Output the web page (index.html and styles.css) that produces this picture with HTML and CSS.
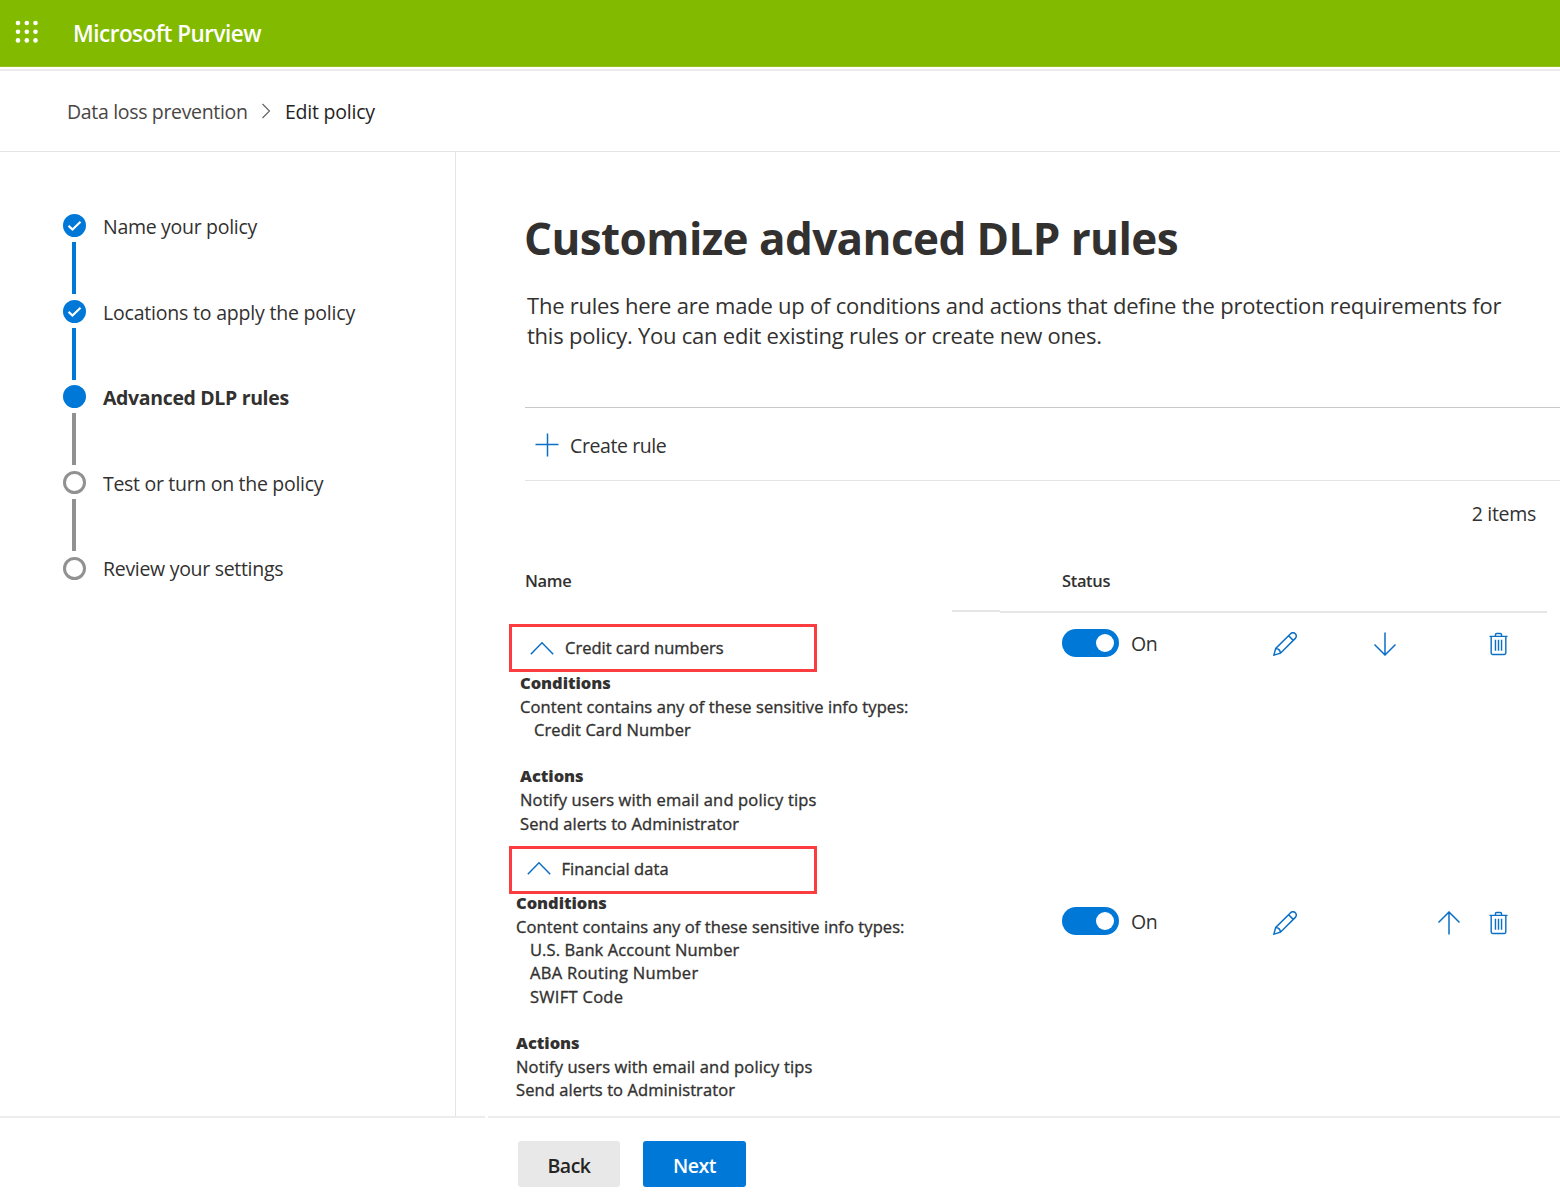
FILE: index.html
```html
<!DOCTYPE html>
<html lang="en">
<head>
<meta charset="utf-8">
<title>Microsoft Purview</title>
<link rel="stylesheet" href="styles.css">
</head>
<body>
<svg width="0" height="0" class="defs">
  <symbol id="pencil" viewBox="0 0 24 24"><path d="M.9 23.1 2.7 16.4 17.6 1.7A3.3 3.3 0 0 1 22.3 6.4L7.5 21.2ZM15.6 3.7l4.7 4.7M2.7 16.4c2.8.2 4.6 2 4.8 4.8"/></symbol>
  <symbol id="down" viewBox="0 0 24 24"><path d="M12 .5v22.5M1.5 12.5 12 23l10.500-10.500"/></symbol>
  <symbol id="up" viewBox="0 0 24 24"><path d="M12 23.500V1M1.500 11.500 12 1l10.500 10.500"/></symbol>
  <symbol id="trash" viewBox="0 0 20 24"><path d="M.5 4h19M2.300 4v17.500q0 1.500 1.500 1.500h12.400q1.500 0 1.500-1.500V4M6.800 4V2.300q0-1.300 1.300-1.300h3.800q1.300 0 1.300 1.300V4M6.800 7.500v11.500M10 7.500v11.500M13.200 7.500v11.500"/></symbol>
  <symbol id="chev" viewBox="0 0 24 14"><path d="M.8 13.200 12 1.800 23.200 13.200"/></symbol>
  <symbol id="check" viewBox="0 0 24 24"><path d="M5.800 12.400 9.900 16.200 18.300 8"/></symbol>
</svg>
<header class="topbar">
  <svg class="waffle" viewBox="0 0 24 24"><g fill="#fff"><circle cx="3" cy="3" r="2.300"/><circle cx="11.800" cy="3" r="2.300"/><circle cx="20.500" cy="3" r="2.300"/><circle cx="3" cy="11.700" r="2.300"/><circle cx="11.800" cy="11.700" r="2.300"/><circle cx="20.500" cy="11.700" r="2.300"/><circle cx="3" cy="20.400" r="2.300"/><circle cx="11.800" cy="20.400" r="2.300"/><circle cx="20.500" cy="20.400" r="2.300"/></g></svg>
  <span class="brand">Microsoft Purview</span>
</header>
<nav class="crumbs">
  <span class="crumb">Data loss prevention</span>
  <svg class="crumb-sep" viewBox="0 0 10 16"><path d="M1.500 1 8.500 8 1.500 15"/></svg>
  <span class="crumb crumb-current">Edit policy</span>
</nav>
<main class="main">
  <aside class="steps">
    <div class="step done"><div class="rail"><i class="dot"><svg><use href="#check"/></svg></i><i class="bar"></i></div><span>Name your policy</span></div>
    <div class="step done"><div class="rail"><i class="dot"><svg><use href="#check"/></svg></i><i class="bar"></i></div><span class="wide">Locations to apply the policy</span></div>
    <div class="step current"><div class="rail"><i class="dot"></i><i class="bar"></i></div><span>Advanced DLP rules</span></div>
    <div class="step"><div class="rail"><i class="dot"></i><i class="bar"></i></div><span>Test or turn on the policy</span></div>
    <div class="step"><div class="rail"><i class="dot"></i></div><span>Review your settings</span></div>
  </aside>
  <section class="content">
    <h1 class="title">Customize advanced DLP rules</h1>
    <p class="desc">The rules here are made up of conditions and actions that define the protection requirements for<br>this policy. You can edit existing rules or create new ones.</p>
    <div class="toolbar">
      <svg class="plus" viewBox="0 0 24 24"><path d="M12.500 .5v23M.5 11.500h23"/></svg>
      <span>Create rule</span>
    </div>
    <div class="count">2 items</div>
    <div class="thead"><span class="th-name">Name</span><span class="th-status">Status</span></div>
    <div class="divider"><i class="divider-a"></i><i class="divider-b"></i></div>
    <div class="rule rule-first">
      <div class="rule-info">
        <div class="rule-name"><svg><use href="#chev"/></svg><span>Credit card numbers</span></div>
        <div class="details">
          <b>Conditions</b>
          <p>Content contains any of these sensitive info types:</p>
          <p class="sub">Credit Card Number</p>
          <b class="actions">Actions</b>
          <p class="notify">Notify users with email and policy tips</p>
          <p>Send alerts to Administrator</p>
        </div>
      </div>
      <div class="controls"><i class="toggle"></i><span class="on">On</span><svg class="edit"><use href="#pencil"/></svg><svg class="move"><use href="#down"/></svg><svg class="trash"><use href="#trash"/></svg></div>
    </div>
    <div class="rule rule-second">
      <div class="rule-info">
        <div class="rule-name"><svg><use href="#chev"/></svg><span>Financial data</span></div>
        <div class="details">
          <b>Conditions</b>
          <p>Content contains any of these sensitive info types:</p>
          <p class="sub">U.S. Bank Account Number</p>
          <p class="sub aba">ABA Routing Number</p>
          <p class="sub aba">SWIFT Code</p>
          <b class="actions">Actions</b>
          <p class="notify">Notify users with email and policy tips</p>
          <p>Send alerts to Administrator</p>
        </div>
      </div>
      <div class="controls"><i class="toggle"></i><span class="on">On</span><svg class="edit"><use href="#pencil"/></svg><svg class="move"><use href="#up"/></svg><svg class="trash"><use href="#trash"/></svg></div>
    </div>
  </section>
</main>
<footer class="footer">
  <div class="footer-line"><i class="line-a"></i><i class="line-b"></i></div>
  <div class="buttons"><button class="btn">Back</button><button class="btn primary">Next</button></div>
</footer>
</body>
</html>
```
FILE: styles.css
```css
* { box-sizing: border-box; margin: 0; padding: 0; }
html, body { width: 1560px; height: 1194px; overflow: hidden; }
body { display: flex; flex-direction: column; background: #fff; color: #323130; font-family: "Open Sans", "Noto Sans", sans-serif; font-size: 19.5px; white-space: nowrap; }
i { display: block; font-style: normal; }
svg { display: block; flex: none; fill: none; stroke: #0b6fc6; stroke-width: 1.5; }
.defs { position: absolute; }

.topbar { height: 67px; flex: none; display: flex; background: #82ba00; border-bottom: 1px solid #93c321; }
.waffle { width: 24px; height: 24px; margin: 20px 0 0 15px; stroke: none; }
.brand { margin-left: 34px; line-height: 68px; color: #fff; font-size: 22.5px; font-weight: 600; letter-spacing: -.5px; }

.crumbs { flex: none; height: 83px; margin-top: 2px; display: flex; border-top: 2px solid #ececec; border-bottom: 1px solid #e4e4e4; padding-left: 67px; line-height: 81px; letter-spacing: -.33px; }
.crumb { width: 180px; color: #484644; }
.crumb-current { color: #252423; letter-spacing: -.22px; }
.crumb-sep { width: 10px; height: 16px; margin: 32px 14px 0 14px; stroke: #605e5c; stroke-width: 1.1; }

.main { flex: none; height: 964px; display: flex; }
.steps { width: 456px; flex: none; border-right: 1px solid #e4e4e4; padding: 62px 0 0 62px; }
.step { display: flex; height: 85.6px; }
.step span { margin-left: 17px; line-height: 25px; letter-spacing: -.3px; }
.step .wide { letter-spacing: -.2px; }
.rail { width: 24px; }
.dot { width: 23px; height: 23px; margin: .3px 0 .7px .8px; border-radius: 50%; border: 3px solid #919191; }
.dot svg { width: 23px; height: 23px; margin: -3px; stroke: #fff; stroke-width: 2.2; }
.bar { width: 4px; height: 52px; margin: 5px auto 0; background: #919191; }
.done .dot, .current .dot { background: #0078d7; border-color: #0078d7; }
.done .bar { background: #0078d7; }
.step.current span { font-weight: 700; letter-spacing: -.35px; }

.content { flex: 1; padding-top: 61px; min-width: 0; }
.title { margin-left: 68px; line-height: 51px; font-size: 44px; font-weight: 700; letter-spacing: -.58px; }
.desc { margin: 26px 0 0 71px; height: 117px; line-height: 30.3px; font-size: 22px; letter-spacing: -.23px; }
.toolbar { margin-left: 69px; height: 74px; display: flex; border-top: 1px solid #c8c8c8; border-bottom: 1px solid #e4e4e4; line-height: 75px; letter-spacing: -.4px; }
.plus { width: 24px; height: 24px; margin: 25px 11px 0 10px; }
.count { height: 66px; padding-right: 24px; text-align: right; line-height: 66px; letter-spacing: -.3px; }
.thead { display: flex; padding-left: 69px; height: 63px; line-height: 68px; font-size: 16.500px; font-weight: 600; letter-spacing: -.35px; }
.th-name { width: 537px; }
.divider { display: flex; height: 14px; padding-left: 496px; }
.divider i { height: 1.500px; background: #e6e6e6; }
.divider-a { width: 48px; }
.divider-b { width: 547px; margin-top: 1px; }

.rule { display: flex; padding-left: 53px; }
.rule-first { height: 222px; }
.rule-info { width: 553px; flex: none; }
.rule-name { display: flex; align-items: center; width: 308px; height: 48px; border: 3px solid #fb3d3f; padding: 0 0 1px 18px; font-size: 16.500px; -webkit-text-stroke: .35px #323130; }
.rule-name svg { width: 24px; height: 14px; margin-right: 11px; }
.rule-second .rule-name { padding: 0 0 4px 14.500px; letter-spacing: .08px; }
.details { margin: -1px 0 0 11px; line-height: 23.200px; font-size: 16.500px; letter-spacing: .08px; }
.details p { -webkit-text-stroke: .35px #323130; }
.details .notify { letter-spacing: .15px; }
.rule-second .details { margin: -3px 0 0 7px; }
.details b { display: block; line-height: 24px; font-weight: 800; letter-spacing: -.05px; }
.details .actions { margin-top: 23px; }
.details .sub { padding-left: 14px; }
.details .aba { letter-spacing: .28px; }
.controls { display: flex; height: 30px; margin-top: 4px; align-items: center; }
.rule-second .controls { margin-top: 60px; }
.toggle { width: 57px; height: 28px; border-radius: 14px; background: #0078d7; padding: 5px 5px 0 34px; }
.toggle::before { content: ""; display: block; width: 18px; height: 18px; border-radius: 50%; background: #fff; }
.on { width: 142px; margin-left: 12px; letter-spacing: -.3px; }
.edit { width: 24px; height: 24px; margin-top: 1px; }
.move { width: 24px; height: 24px; margin: 1px 92px 0 76px; }
.rule-second .edit { margin-top: 3px; }
.rule-second .move { margin: 3px 28px 0 140px; }
.trash { width: 19px; height: 24px; margin-top: 1px; }
.rule-second .trash { margin-top: 3px; }

.footer-line { display: flex; gap: 3px; }
.footer-line i { height: 2px; background: #ececec; }
.line-a { width: 485px; }
.line-b { flex: 1; }
.buttons { display: flex; gap: 23px; padding: 23px 0 0 518px; }
.btn { width: 102px; height: 46px; border: 0; border-radius: 3px; background: #e8e8e8; color: #252423; font: 600 19.500px "Open Sans", "Noto Sans", sans-serif; letter-spacing: -.5px; padding-top: 3px; }
.primary { width: 103px; background: #0078d7; color: #fff; }
```
